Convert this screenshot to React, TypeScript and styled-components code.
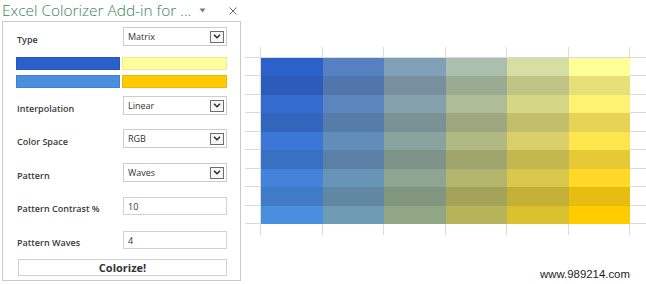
import React from 'react'
import styled, { createGlobalStyle } from 'styled-components'

const GlobalStyle = createGlobalStyle`
  body {
    margin: 0;
    background: #ffffff;
    font-family: "Open Sans", "Noto Sans", sans-serif;
  }
`

const Page = styled.div`
  position: relative;
  display: flex;
  align-items: flex-start;
  width: 646px;
  height: 284px;
  overflow: hidden;
`

const Panel = styled.div`
  flex: none;
  width: 243px;
  display: flex;
  flex-direction: column;
`

const TitleBar = styled.div`
  height: 21px;
  display: flex;
  align-items: center;
  padding-left: 2px;
`

const Title = styled.div`
  flex: 1;
  font-weight: 300;
  font-size: 15.4px;
  line-height: 21px;
  color: #38845c;
  white-space: nowrap;
`

const PaneIcon = styled.svg`
  flex: none;
  display: block;
  margin-right: ${p => p.$gap}px;
`

const Body = styled.div`
  box-sizing: border-box;
  margin-left: 2px;
  width: 239px;
  height: 260px;
  border: 1px solid #cacaca;
  padding: 5px 0 0 14px;
  display: flex;
  flex-direction: column;
`

const Row = styled.div`
  display: grid;
  grid-template-columns: 106px 104px;
  align-items: center;
  height: ${p => p.$h}px;
  margin-top: ${p => p.$top}px;
`

const Label = styled.div`
  font-weight: 600;
  font-size: 9px;
  color: #3a3a3a;
  padding-top: 5px;
  white-space: nowrap;
`

const Select = styled.div`
  box-sizing: border-box;
  height: 100%;
  border: 1px solid #cdcdcd;
  background: #fff;
  display: flex;
  align-items: center;
  justify-content: space-between;
  padding: 0 2px 0 4px;
  font-size: 9px;
  color: #333;
`

const ArrowBox = styled.div`
  box-sizing: border-box;
  width: 14px;
  height: 12px;
  border: 1px solid #6e6e6e;
  background: #f6f6f6;
  display: flex;
  align-items: center;
  justify-content: center;
`

const TextInput = styled.div`
  box-sizing: border-box;
  height: 100%;
  border: 1px solid #d2d2d2;
  background: #fff;
  display: flex;
  align-items: center;
  padding-left: 4px;
  font-size: 9px;
  color: #333;
`

const SwatchRow = styled.div`
  display: grid;
  grid-template-columns: 104px 105px;
  column-gap: 2px;
  height: 13px;
  margin-left: -1px;
  margin-top: ${p => p.$top}px;
`

const Swatch = styled.div`
  box-sizing: border-box;
  background: ${p => p.$color};
  border: 1px solid rgba(0, 0, 0, 0.08);
`

const Button = styled.div`
  box-sizing: border-box;
  margin: 11px 0 0 1px;
  width: 209px;
  height: 17px;
  border: 1px solid #d0d0d0;
  background: #fff;
  display: flex;
  align-items: center;
  justify-content: center;
  font-weight: 700;
  font-size: 11px;
  color: #333;
`

const Sheet = styled.div`
  flex: none;
  margin: 47px 0 0 2px;
  display: grid;
  grid-template-columns: 16px repeat(6, 61.5px) 16px;
  grid-template-rows: 11px repeat(9, 18.45px) 11px;
`

const Cell = styled.div`
  box-sizing: border-box;
  background: ${p => p.$bg || 'transparent'};
  border-right: ${p => (p.$r ? '1px solid #dadada' : 'none')};
  border-bottom: ${p => (p.$b ? '1px solid #dadada' : 'none')};
`

const Watermark = styled.div`
  position: absolute;
  left: 540px;
  top: 268px;
  font-family: "Liberation Sans", Arial, sans-serif;
  font-size: 11.4px;
  color: #1c1c1c;
  text-shadow: 0 0 2px #fff, 0 0 2px #fff;
`

type RGB = [number, number, number]

const TOP_L: RGB = [44, 96, 203]
const TOP_R: RGB = [255, 255, 153]
const BOT_L: RGB = [74, 142, 224]
const BOT_R: RGB = [255, 204, 0]

const mix = (a: RGB, b: RGB, t: number): RGB =>
  [0, 1, 2].map(i => a[i] + (b[i] - a[i]) * t) as RGB

const cellColor = (row: number, col: number) => {
  const l = mix(TOP_L, BOT_L, row / 8)
  const r = mix(TOP_R, BOT_R, row / 8)
  const c = mix(l, r, col / 5)
  const k = row % 2 === 1 ? 0.9 : 1
  return `rgb(${c.map(v => Math.round(v * k)).join(',')})`
}

const Chevron = () => (
  <svg width="8" height="5" viewBox="0 0 8 5">
    <path d="M1 0.8 L4 3.8 L7 0.8" fill="none" stroke="#222" strokeWidth="1.3" />
  </svg>
)

const DropField = ({ label, value, top }: { label: string; value: string; top: number }) => (
  <Row $h={19} $top={top}>
    <Label>{label}</Label>
    <Select>
      <span>{value}</span>
      <ArrowBox>
        <Chevron />
      </ArrowBox>
    </Select>
  </Row>
)

const InputField = ({ label, value, top }: { label: string; value: string; top: number }) => (
  <Row $h={17} $top={top}>
    <Label>{label}</Label>
    <TextInput>{value}</TextInput>
  </Row>
)

const SheetGrid = () => {
  const cells: React.ReactNode[] = []
  for (let r = 0; r < 11; r++) {
    for (let c = 0; c < 8; c++) {
      const edgeRow = r === 0 || r === 10
      const dataCol = c >= 1 && c <= 6
      const key = `${r}-${c}`
      if (!edgeRow && dataCol) {
        cells.push(<Cell key={key} $bg={cellColor(r - 1, c - 1)} />)
      } else if (edgeRow) {
        cells.push(<Cell key={key} $r={c < 7} $b={r === 0} />)
      } else {
        cells.push(<Cell key={key} $r={c === 0} $b />)
      }
    }
  }
  return <Sheet>{cells}</Sheet>
}

const App = () => {
  return (
    <Page>
      <GlobalStyle />
      <Panel>
        <TitleBar>
          <Title>Excel Colorizer Add-in for ...</Title>
          <PaneIcon $gap={23} width="7" height="5" viewBox="0 0 7 5">
            <path d="M0.5 0.5 L6.5 0.5 L3.5 4.5 Z" fill="#7a7a7a" />
          </PaneIcon>
          <PaneIcon $gap={6} width="8" height="8" viewBox="0 0 8 8">
            <path d="M0.5 0.5 L7.5 7.5 M7.5 0.5 L0.5 7.5" stroke="#6a6a6a" strokeWidth="1" />
          </PaneIcon>
        </TitleBar>
        <Body>
          <DropField label="Type" value="Matrix" top={0} />
          <SwatchRow $top={11}>
            <Swatch $color="#2b5fcb" />
            <Swatch $color="#ffff9c" />
          </SwatchRow>
          <SwatchRow $top={5}>
            <Swatch $color="#4a8ee0" />
            <Swatch $color="#ffcb00" />
          </SwatchRow>
          <DropField label="Interpolation" value="Linear" top={8} />
          <DropField label="Color Space" value="RGB" top={14} />
          <DropField label="Pattern" value="Waves" top={15} />
          <InputField label="Pattern Contrast %" value="10" top={15} />
          <InputField label="Pattern Waves" value="4" top={17} />
          <Button>Colorize!</Button>
        </Body>
      </Panel>
      <SheetGrid />
      <Watermark>www.989214.com</Watermark>
    </Page>
  )
}

export default App
